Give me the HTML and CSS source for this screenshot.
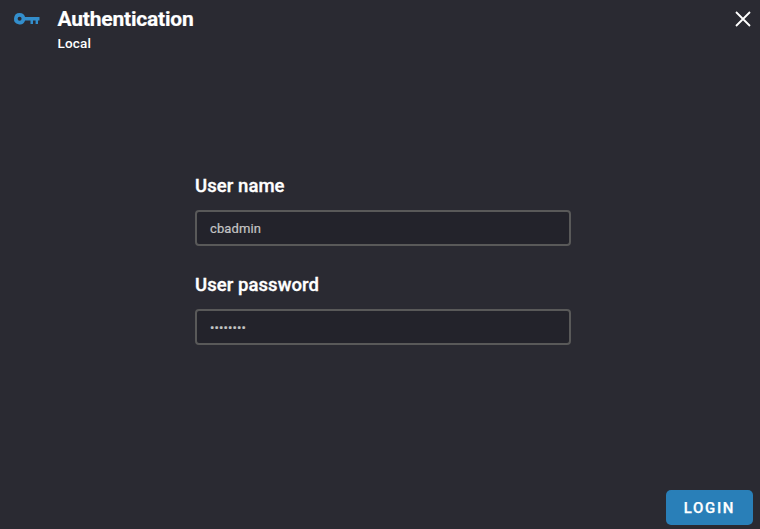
FILE: index.html
```html
<!DOCTYPE html>
<html lang="en">
<head>
<meta charset="utf-8">
<title>Authentication</title>
<link rel="stylesheet" href="styles.css">
</head>
<body>
<div class="dialog">
  <header class="header">
    <svg class="key" width="28" height="14" viewBox="0 0 28 14"><path fill="#338ecc" fill-rule="evenodd" d="M6.6 1a5.7 5.7 0 0 1 5.5 4H26.5v3.6H25V12h-2.4V8.6h-2.6V12h-2.5V8.6h-5.4A5.7 5.7 0 1 1 6.6 1zm0 3.7a2 2 0 1 0 0 4 2 2 0 0 0 0-4z"/></svg>
    <div class="titles">
      <h1 class="title">Authentication</h1>
      <div class="subtitle">Local</div>
    </div>
    <svg class="close" width="16" height="16" viewBox="0 0 16 16"><path d="M1 1l14 14M15 1L1 15" stroke="#fff" stroke-width="1.8"/></svg>
  </header>
  <main class="form">
    <div class="label">User name</div>
    <div class="field">cbadmin</div>
    <div class="label">User password</div>
    <div class="field">••••••••</div>
  </main>
  <footer class="footer"><button class="login">LOGIN</button></footer>
</div>
</body>
</html>
```
FILE: styles.css
```css
* { box-sizing: border-box; }
body { margin: 0; background: #2a2a32; color: #fff; font-family: Roboto, sans-serif; }
.dialog { height: 529px; display: flex; flex-direction: column; }
.header { display: flex; align-items: flex-start; height: 176px; padding: 7px 9px 0 13px; }
.key { margin-top: 5px; }
.titles { flex: 1; margin-left: 16.5px; }
.title { margin: 0; font-size: 21px; line-height: 24px; font-weight: 700; letter-spacing: -.2px; -webkit-text-stroke: .2px #fff; }
.subtitle { margin-top: 4px; font-size: 13.5px; line-height: 16px; font-weight: 500; letter-spacing: .2px; }
.close { margin-top: 4px; }
.form { width: 376px; margin-left: 195px; }
.label { font-size: 18.5px; line-height: 20px; font-weight: 500; margin-bottom: 14px; letter-spacing: .07px; -webkit-text-stroke: .35px #fff; }
.field { height: 36px; margin-bottom: 29px; padding: 0 13px; border: 2px solid #595959; border-radius: 4px; background: #23232b; color: #c4c4c4; font-size: 13px; line-height: 33px; letter-spacing: .12px; -webkit-text-stroke: .2px #c4c4c4; }
.footer { margin-top: auto; padding: 0 7px 4px; display: flex; justify-content: flex-end; }
.login { width: 87px; height: 35px; padding: 1px 0 0; border: 0; border-radius: 5px; background: #297fb8; color: #fff; font: 500 15px Roboto, sans-serif; letter-spacing: 1.65px; -webkit-text-stroke: .25px #fff; }
```
